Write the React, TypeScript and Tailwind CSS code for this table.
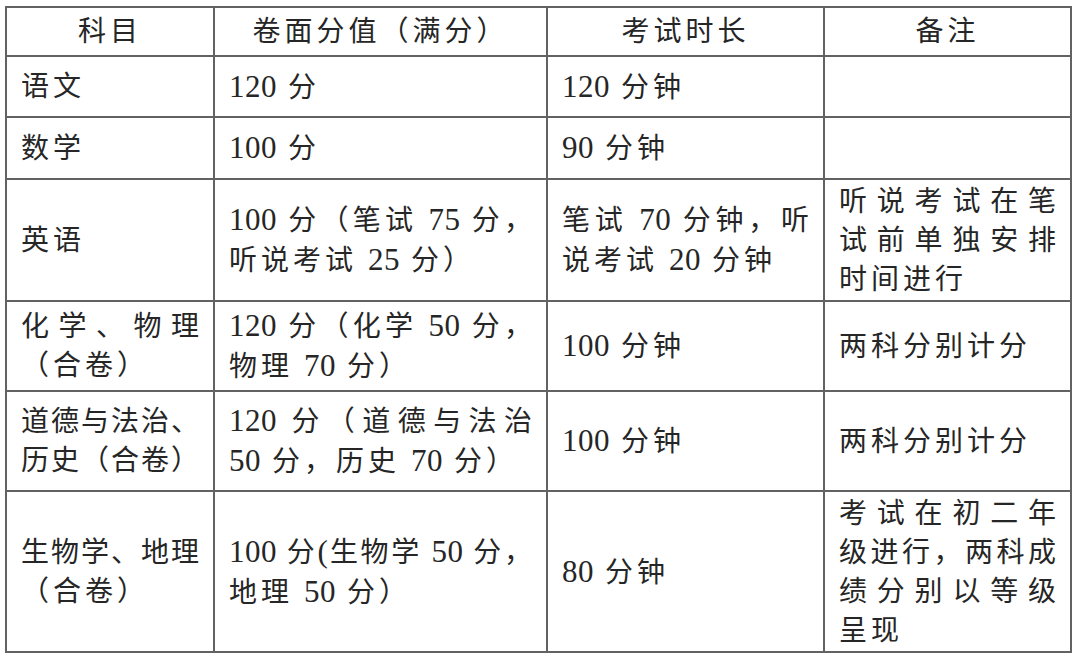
type Line = { text: string; justify?: boolean };
type Cell = Line[];

const rows: { height: number; cells: Cell[] }[] = [
  {
    height: 61,
    cells: [[{ text: "语文" }], [{ text: "120 分" }], [{ text: "120 分钟" }], []],
  },
  {
    height: 62,
    cells: [[{ text: "数学" }], [{ text: "100 分" }], [{ text: "90 分钟" }], []],
  },
  {
    height: 122,
    cells: [
      [{ text: "英语" }],
      [
        { text: "100 分（笔试 75 分，", justify: true },
        { text: "听说考试 25 分）" },
      ],
      [
        { text: "笔试 70 分钟，听", justify: true },
        { text: "说考试 20 分钟" },
      ],
      [
        { text: "听说考试在笔", justify: true },
        { text: "试前单独安排", justify: true },
        { text: "时间进行" },
      ],
    ],
  },
  {
    height: 90,
    cells: [
      [{ text: "化学、物理", justify: true }, { text: "（合卷）" }],
      [
        { text: "120 分（化学 50 分，", justify: true },
        { text: "物理 70 分）" },
      ],
      [{ text: "100 分钟" }],
      [{ text: "两科分别计分" }],
    ],
  },
  {
    height: 100,
    cells: [
      [
        { text: "道德与法治、", justify: true },
        { text: "历史（合卷）", justify: true },
      ],
      [
        { text: "120 分（道德与法治", justify: true },
        { text: "50 分，历史 70 分）" },
      ],
      [{ text: "100 分钟" }],
      [{ text: "两科分别计分" }],
    ],
  },
  {
    height: 161,
    cells: [
      [{ text: "生物学、地理", justify: true }, { text: "（合卷）" }],
      [
        { text: "100 分(生物学 50 分，", justify: true },
        { text: "地理 50 分）" },
      ],
      [{ text: "80 分钟" }],
      [
        { text: "考试在初二年", justify: true },
        { text: "级进行，两科成", justify: true },
        { text: "绩分别以等级", justify: true },
        { text: "呈现" },
      ],
    ],
  },
];

const headers = ["科目", "卷面分值（满分）", "考试时长", "备注"];
const colWidths = ["w-[208px]", "w-[333px]", "w-[277px]", "w-[247px]"];

// digits are set a little larger and tighter, like the Times numerals in the source
function Runs({ text }: { text: string }) {
  const parts = text.split(/([0-9()]+)/).filter(Boolean);
  return (
    <>
      {parts.map((part, i) =>
        /^[0-9()]+$/.test(part) ? (
          <span key={i} className="text-[31px] tracking-[0.5px]">
            {part}
          </span>
        ) : (
          <span key={i}>{part}</span>
        ),
      )}
    </>
  );
}

function CellLines({ lines }: { lines: Cell }) {
  return (
    <>
      {lines.map((line, i) =>
        line.justify ? (
          <div
            key={i}
            className="whitespace-nowrap text-justify tracking-[1px] [text-align-last:justify]"
          >
            <Runs text={line.text} />
          </div>
        ) : (
          <div key={i} className="whitespace-nowrap tracking-[4px]">
            <Runs text={line.text} />
          </div>
        ),
      )}
    </>
  );
}

export default function App() {
  return (
    <div className="h-[659px] w-[1080px] overflow-hidden bg-white pl-[5px] pt-[6px]">
      <table
        className="w-[1065px] table-fixed border-collapse text-[28px] leading-[39px] text-[#262626]"
        style={{ fontFamily: '"Liberation Serif", "Noto Sans CJK SC", serif' }}
      >
        <colgroup>
          {colWidths.map((w, i) => (
            <col key={i} className={w} />
          ))}
        </colgroup>
        <thead>
          <tr className="h-[49px]">
            {headers.map((h) => (
              <th
                key={h}
                className="border-2 border-[#626262] px-[14px] text-center font-normal tracking-[4px]"
              >
                {h}
              </th>
            ))}
          </tr>
        </thead>
        <tbody>
          {rows.map((row, r) => (
            <tr key={r} style={{ height: row.height }}>
              {row.cells.map((cell, c) => (
                <td
                  key={c}
                  className="border-2 border-[#626262] pl-[14px] pr-[13px] align-middle"
                >
                  <CellLines lines={cell} />
                </td>
              ))}
            </tr>
          ))}
        </tbody>
      </table>
    </div>
  );
}
